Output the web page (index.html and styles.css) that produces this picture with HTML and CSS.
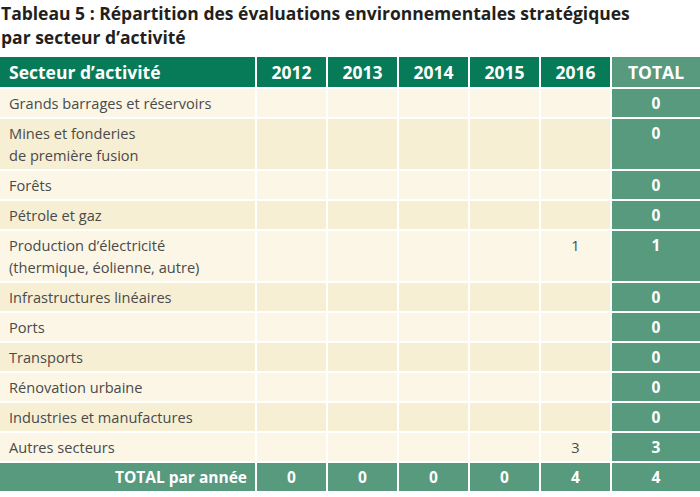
FILE: index.html
```html
<!DOCTYPE html>
<html lang="fr">
<head>
<meta charset="utf-8">
<title>Tableau 5</title>
<link rel="stylesheet" href="styles.css">
</head>
<body>
<h1 class="title">Tableau 5 : Répartition des évaluations environnementales stratégiques<br>par secteur d’activité</h1>
<div class="table">
  <div class="row head">
    <div class="cell label">Secteur d’activité</div>
    <div class="cell">2012</div>
    <div class="cell">2013</div>
    <div class="cell">2014</div>
    <div class="cell">2015</div>
    <div class="cell">2016</div>
    <div class="cell total">TOTAL</div>
  </div>
  <div class="row light">
    <div class="cell label">Grands barrages et réservoirs</div>
    <div class="cell"></div><div class="cell"></div><div class="cell"></div><div class="cell"></div><div class="cell"></div>
    <div class="cell total">0</div>
  </div>
  <div class="row dark">
    <div class="cell label">Mines et fonderies<br>de première fusion</div>
    <div class="cell"></div><div class="cell"></div><div class="cell"></div><div class="cell"></div><div class="cell"></div>
    <div class="cell total">0</div>
  </div>
  <div class="row light">
    <div class="cell label">Forêts</div>
    <div class="cell"></div><div class="cell"></div><div class="cell"></div><div class="cell"></div><div class="cell"></div>
    <div class="cell total">0</div>
  </div>
  <div class="row dark">
    <div class="cell label">Pétrole et gaz</div>
    <div class="cell"></div><div class="cell"></div><div class="cell"></div><div class="cell"></div><div class="cell"></div>
    <div class="cell total">0</div>
  </div>
  <div class="row light">
    <div class="cell label">Production d’électricité<br>(thermique, éolienne, autre)</div>
    <div class="cell"></div><div class="cell"></div><div class="cell"></div><div class="cell"></div><div class="cell">1</div>
    <div class="cell total">1</div>
  </div>
  <div class="row dark">
    <div class="cell label">Infrastructures linéaires</div>
    <div class="cell"></div><div class="cell"></div><div class="cell"></div><div class="cell"></div><div class="cell"></div>
    <div class="cell total">0</div>
  </div>
  <div class="row light">
    <div class="cell label">Ports</div>
    <div class="cell"></div><div class="cell"></div><div class="cell"></div><div class="cell"></div><div class="cell"></div>
    <div class="cell total">0</div>
  </div>
  <div class="row dark">
    <div class="cell label">Transports</div>
    <div class="cell"></div><div class="cell"></div><div class="cell"></div><div class="cell"></div><div class="cell"></div>
    <div class="cell total">0</div>
  </div>
  <div class="row light">
    <div class="cell label">Rénovation urbaine</div>
    <div class="cell"></div><div class="cell"></div><div class="cell"></div><div class="cell"></div><div class="cell"></div>
    <div class="cell total">0</div>
  </div>
  <div class="row dark">
    <div class="cell label">Industries et manufactures</div>
    <div class="cell"></div><div class="cell"></div><div class="cell"></div><div class="cell"></div><div class="cell"></div>
    <div class="cell total">0</div>
  </div>
  <div class="row light">
    <div class="cell label">Autres secteurs</div>
    <div class="cell"></div><div class="cell"></div><div class="cell"></div><div class="cell"></div><div class="cell">3</div>
    <div class="cell total">3</div>
  </div>
  <div class="row foot">
    <div class="cell label">TOTAL par année</div>
    <div class="cell">0</div>
    <div class="cell">0</div>
    <div class="cell">0</div>
    <div class="cell">0</div>
    <div class="cell">4</div>
    <div class="cell total">4</div>
  </div>
</div>
</body>
</html>
```

FILE: styles.css
```css
html, body {
  margin: 0;
  padding: 0;
  background: #ffffff;
}

body {
  width: 700px;
  font-family: "Open Sans", "Liberation Sans", sans-serif;
  color: #4a4a4a;
}

.title {
  margin: 0 0 8px 0;
  padding: 1px 0 0 1px;
  font-size: 17.5px;
  line-height: 24px;
  font-weight: 700;
  color: #231f20;
}

.table {
  display: grid;
  grid-template-columns: 255px repeat(5, 69px) 1fr;
  gap: 2px;
}

.row {
  display: contents;
}

.cell {
  padding: 3px 0;
  font-size: 14.6px;
  font-weight: 400;
  line-height: 22px;
  text-align: center;
}

.cell.label {
  text-align: left;
  padding-left: 9px;
}

.light .cell {
  background: #fbf6e6;
}

.dark .cell {
  background: #f6efd4;
}

.row .cell.total {
  background: #579a7e;
  color: #ffffff;
  font-weight: 700;
  font-size: 15.5px;
}

.head .cell {
  padding-top: 4px;
  padding-bottom: 4px;
  background: #077a58;
  color: #ffffff;
  font-weight: 700;
  font-size: 17.5px;
}

.head .cell.total {
  background: #579a7e;
  font-size: 17.5px;
}

.foot .cell {
  padding-top: 3px;
  padding-bottom: 3px;
  background: #579a7e;
  color: #ffffff;
  font-weight: 700;
  font-size: 15.5px;
}

.foot .cell.label {
  text-align: right;
  padding-left: 0;
  padding-right: 8px;
}
```
